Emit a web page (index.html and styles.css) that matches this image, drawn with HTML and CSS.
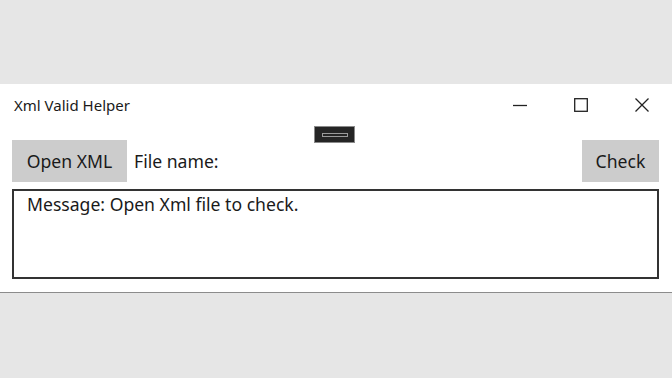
FILE: index.html
```html
<!DOCTYPE html>
<html lang="en">
<head>
    <meta charset="UTF-8">
    <title>Xml Valid Helper</title>
    <link rel="stylesheet" href="styles.css">
</head>
<body>
    <div class="window">
        <div class="titlebar">
            <span class="title">Xml Valid Helper</span>
            <div class="caption">
                <span class="cap-btn">
                    <svg width="14" height="14" viewBox="0 0 14 14"><path d="M0 7.5h14" stroke="#222" stroke-width="1.3"/></svg>
                </span>
                <span class="cap-btn">
                    <svg width="14" height="14" viewBox="0 0 14 14"><rect x="0.7" y="0.7" width="12.6" height="12.6" fill="none" stroke="#222" stroke-width="1.3"/></svg>
                </span>
                <span class="cap-btn">
                    <svg width="14" height="14" viewBox="0 0 14 14"><path d="M0.5 0.5L13.5 13.5M13.5 0.5L0.5 13.5" stroke="#222" stroke-width="1.3"/></svg>
                </span>
            </div>
        </div>

        <div class="handle"><div class="handle-inner"></div></div>

        <div class="content">
            <div class="toolbar">
                <button class="btn btn-open">Open XML</button>
                <span class="filename">File name:</span>
                <button class="btn btn-check">Check</button>
            </div>
            <div class="message">Message: Open Xml file to check.</div>
        </div>
    </div>
</body>
</html>
```

FILE: styles.css
```css
body {
    margin: 0;
    background-color: #e6e6e6;
    font-family: "Noto Sans", "Open Sans", sans-serif;
    color: #1a1a1a;
    height: 378px;
    overflow: hidden;
}

.window {
    position: relative;
    margin-top: 84px;
    height: 208px;
    background: white;
    border-bottom: 1px solid #8c8c8c;
}

.titlebar {
    display: flex;
    align-items: center;
    height: 42px;
}

.title {
    padding-left: 14px;
    font-size: 15px;
    flex: 1;
}

.caption {
    display: flex;
    height: 100%;
}

.cap-btn {
    width: 61px;
    display: flex;
    align-items: center;
    justify-content: center;
}

.handle {
    position: absolute;
    left: 314px;
    top: 42px;
    width: 39px;
    height: 15px;
    background: #252525;
    border: 1px solid #8a8a8a;
    display: flex;
    align-items: center;
    justify-content: center;
}

.handle-inner {
    width: 24px;
    height: 2px;
    border: 1px solid #9a9a9a;
}

.content {
    padding: 14px 13px 0 12px;
}

.toolbar {
    display: flex;
    align-items: center;
    height: 42px;
}

.btn {
    height: 42px;
    padding: 0;
    background-color: #cccccc;
    border: none;
    font-family: inherit;
    font-size: 17.6px;
    color: #1a1a1a;
}

.btn-open {
    width: 115px;
}

.filename {
    flex: 1;
    margin-left: 7px;
    font-size: 17.6px;
}

.btn-check {
    width: 77px;
}

.message {
    margin-top: 7px;
    height: 86px;
    border: 2px solid #333;
    padding: 0 13px;
    font-size: 17.6px;
    line-height: 26px;
}
```
